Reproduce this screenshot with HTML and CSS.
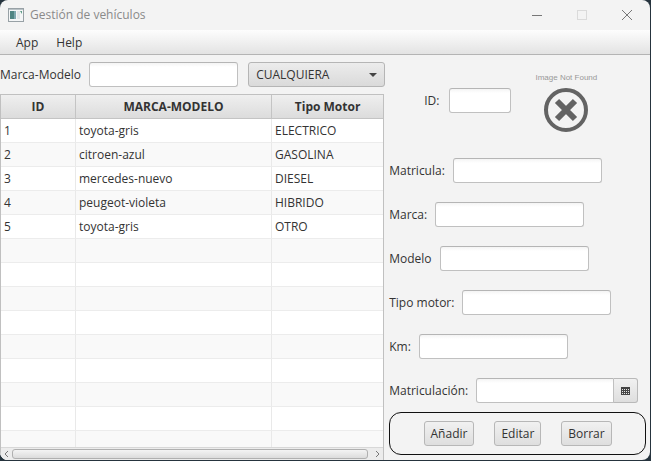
FILE: index.html
```html
<!DOCTYPE html>
<html lang="es">
<head>
<meta charset="utf-8">
<title>Gestión de vehículos</title>
<link rel="stylesheet" href="styles.css">
</head>
<body>
<div class="window">
  <header class="titlebar">
    <svg class="app-icon" width="16" height="14" viewBox="0 0 16 14" aria-hidden="true">
      <rect x="0.5" y="0.5" width="15" height="13" fill="#f4f6f7" stroke="#98a1a6"/>
      <rect x="1" y="1" width="14" height="1" fill="#b9c2c6"/>
      <rect x="2" y="3" width="6" height="8" fill="#4f8583"/>
      <rect x="6" y="3" width="2" height="8" fill="#7fa9b0"/>
      <rect x="9" y="3" width="3" height="8" fill="#e1e6e8"/>
      <path d="M12 3h2v3z" fill="#5d9a86"/>
    </svg>
    <span class="title">Gestión de vehículos</span>
    <div class="window-buttons">
      <button type="button" aria-label="Minimizar"><svg width="12" height="12" viewBox="0 0 12 12"><path d="M1 6.5h10" stroke="#777"/></svg></button>
      <button type="button" aria-label="Maximizar" disabled><svg width="12" height="12" viewBox="0 0 12 12"><rect x="1.5" y="1.5" width="9" height="9" fill="none" stroke="#dadada"/></svg></button>
      <button type="button" aria-label="Cerrar"><svg width="12" height="12" viewBox="0 0 12 12"><path d="M1 1l10 10M11 1L1 11" stroke="#777"/></svg></button>
    </div>
  </header>
  <nav class="menubar">
    <button type="button">App</button>
    <button type="button">Help</button>
  </nav>
  <main class="content">
    <section class="list">
      <div class="filters">
        <label for="filter">Marca-Modelo</label>
        <input class="field" id="filter" type="text">
        <div class="combo">
          <select aria-label="Tipo de motor">
            <option>CUALQUIERA</option>
            <option>ELECTRICO</option>
            <option>GASOLINA</option>
            <option>DIESEL</option>
            <option>HIBRIDO</option>
            <option>OTRO</option>
          </select>
          <svg class="arrow" width="8" height="4" viewBox="0 0 8 4" aria-hidden="true"><path d="M0 0h8L4 4z" fill="#444"/></svg>
        </div>
      </div>
      <div class="table-view">
        <div class="rows">
          <table>
            <colgroup><col class="col-id"><col class="col-model"><col></colgroup>
            <thead><tr><th>ID</th><th>MARCA-MODELO</th><th>Tipo Motor</th></tr></thead>
            <tbody>
              <tr><td>1</td><td>toyota-gris</td><td>ELECTRICO</td></tr>
              <tr><td>2</td><td>citroen-azul</td><td>GASOLINA</td></tr>
              <tr><td>3</td><td>mercedes-nuevo</td><td>DIESEL</td></tr>
              <tr><td>4</td><td>peugeot-violeta</td><td>HIBRIDO</td></tr>
              <tr><td>5</td><td>toyota-gris</td><td>OTRO</td></tr>
              <tr><td></td><td></td><td></td></tr>
              <tr><td></td><td></td><td></td></tr>
              <tr><td></td><td></td><td></td></tr>
              <tr><td></td><td></td><td></td></tr>
              <tr><td></td><td></td><td></td></tr>
              <tr><td></td><td></td><td></td></tr>
              <tr><td></td><td></td><td></td></tr>
              <tr><td></td><td></td><td></td></tr>
              <tr><td></td><td></td><td></td></tr>
            </tbody>
          </table>
        </div>
        <div class="scrollbar">
          <button type="button" aria-label="Desplazar a la izquierda"><svg width="5" height="8" viewBox="0 0 5 8"><path d="M4 1L1 4l3 3" fill="none" stroke="#777"/></svg></button>
          <div class="thumb"></div>
          <button type="button" aria-label="Desplazar a la derecha"><svg width="5" height="8" viewBox="0 0 5 8"><path d="M1 1l3 3-3 3" fill="none" stroke="#777"/></svg></button>
        </div>
      </div>
    </section>
    <form class="details">
      <div class="summary">
        <div class="row"><label for="id">ID:</label><input class="field short" id="id" type="text"></div>
        <figure>
          <figcaption>Image Not Found</figcaption>
          <svg width="46" height="46" viewBox="0 0 46 46" aria-hidden="true">
            <circle cx="23" cy="23" r="20" fill="none" stroke="#636363" stroke-width="4"/>
            <path d="M14 14l18 18M32 14L14 32" stroke="#636363" stroke-width="6"/>
          </svg>
        </figure>
      </div>
      <div class="row"><label for="plate">Matricula:</label><input class="field" id="plate" type="text"></div>
      <div class="row"><label for="brand">Marca:</label><input class="field" id="brand" type="text"></div>
      <div class="row"><label for="model">Modelo</label><input class="field" id="model" type="text"></div>
      <div class="row"><label for="engine">Tipo motor:</label><input class="field" id="engine" type="text"></div>
      <div class="row"><label for="km">Km:</label><input class="field" id="km" type="text"></div>
      <div class="row">
        <label for="date">Matriculación:</label>
        <div class="date">
          <input class="field" id="date" type="text">
          <button type="button" aria-label="Abrir calendario"><svg width="9" height="8" viewBox="0 0 9 8"><path d="M0 0h9v8H0z" fill="#444"/><path d="M1 2h1v1H1zM3 2h1v1H3zM5 2h1v1H5zM7 2h1v1H7zM1 4h1v1H1zM3 4h1v1H3zM5 4h1v1H5zM7 4h1v1H7zM1 6h1v1H1zM3 6h1v1H3zM5 6h1v1H5zM7 6h1v1H7z" fill="#e4e4e4"/></svg></button>
        </div>
      </div>
      <div class="actions">
        <button type="button">Añadir</button>
        <button type="button">Editar</button>
        <button type="button">Borrar</button>
      </div>
    </form>
  </main>
</div>
</body>
</html>
```
FILE: styles.css
```css
* { box-sizing: border-box; }

body {
  margin: 0;
  background: #26343e;
  color: #333;
  font: 12px/16px "Open Sans", "Noto Sans", sans-serif;
}

button, input, select {
  margin: 0;
  color: inherit;
  font: inherit;
}

svg { display: block; }

.window {
  display: flex;
  flex-direction: column;
  height: calc(100vh - 1px);
  margin-right: 1px;
  overflow: hidden;
  border-radius: 8px;
  background: #f3f3f3;
}

.titlebar {
  display: flex;
  flex: none;
  align-items: center;
  height: 30px;
  padding-left: 8px;
  color: #8a8a8a;
}

.title { margin-left: 6px; }

.window-buttons {
  display: flex;
  margin-left: auto;
  padding-right: 1px;
}

.window-buttons button {
  display: grid;
  place-items: center;
  width: 45px;
  height: 28px;
  padding: 0;
  border: 0;
  background: none;
}

.menubar {
  display: flex;
  flex: none;
  height: 25px;
  padding: 0 7px;
  border-bottom: 1px solid #b4b4b4;
  background: linear-gradient(#fdfdfd, #e3e3e3);
}

.menubar button {
  padding: 2px 9px 0;
  border: 0;
  background: none;
}

.content {
  display: flex;
  flex: 1;
  min-height: 0;
}

.list {
  display: flex;
  flex: 3;
  flex-direction: column;
  min-width: 385px;
}

.filters {
  display: flex;
  align-items: center;
  gap: 8px;
  padding: 7px 0;
}

.filters .field { flex: 1; }

.field {
  width: 149px;
  min-width: 0;
  height: 25px;
  padding: 0 7px;
  border: 1px solid #c0c0c0;
  border-top-color: #b5b5b5;
  border-radius: 3px;
  background: linear-gradient(#f4f4f4, #fff 4px);
}

.field.short { width: 62px; }

.combo {
  position: relative;
  width: 137px;
  margin-left: 2px;
}

.combo select {
  display: block;
  width: 100%;
  height: 25px;
  padding: 0 7px;
  appearance: none;
  border: 1px solid #b5b5b5;
  border-radius: 3px;
  background: linear-gradient(#ececec, #dadada);
}

.arrow {
  position: absolute;
  top: 11px;
  right: 8px;
  pointer-events: none;
}

.table-view {
  display: flex;
  flex: 1;
  flex-direction: column;
  min-height: 0;
  margin-right: 1px;
  border: 1px solid #c0c0c0;
  border-bottom: 0;
  background: #fff;
}

.rows {
  flex: 1;
  min-height: 0;
  overflow: hidden;
}

table {
  width: 100%;
  border-collapse: separate;
  border-spacing: 0;
  table-layout: fixed;
}

.col-id { width: 75px; }
.col-model { width: 196px; }

th, td {
  height: 24px;
  padding: 0 3px;
  border-right: 1px solid #e9e9e9;
  border-bottom: 1px solid #ececec;
  text-align: left;
}

th {
  border-color: #c4c4c4;
  background: linear-gradient(#efefef, #dcdcdc);
  text-align: center;
}

th:last-child, td:last-child { border-right: 0; }

tbody tr:nth-child(even) { background: #f9f9f9; }

.scrollbar {
  display: flex;
  flex: none;
  align-items: center;
  height: 13px;
  border-top: 1px solid #d8d8d8;
  background: #ececec;
}

.scrollbar button {
  display: grid;
  place-items: center;
  width: 11px;
  height: 12px;
  padding: 0;
  border: 0;
  background: none;
}

.thumb {
  flex: 1;
  height: 10px;
  margin-right: 4px;
  border: 1px solid #b0b0b0;
  border-radius: 3px;
  background: linear-gradient(#f4f4f4, #dcdcdc);
}

.details {
  display: flex;
  flex: 2;
  flex-direction: column;
  gap: 19px;
  padding: 0 4px;
}

.summary {
  display: flex;
  align-items: flex-start;
  height: 84px;
  padding: 18px 0 0 35px;
}

.summary .row { margin-top: 15px; }

.row {
  display: flex;
  align-items: center;
  gap: 8px;
}

.summary .row { gap: 10px; }

figure {
  display: flex;
  flex-direction: column;
  align-items: center;
  gap: 4px;
  margin: 0 0 0 24px;
}

figcaption {
  color: #999;
  font: 8px/10px "Liberation Sans", sans-serif;
}

.date { display: flex; }

.date .field {
  width: 138px;
  border-radius: 3px 0 0 3px;
}

.date button {
  display: grid;
  place-items: center;
  width: 24px;
  padding: 0;
  border: 1px solid #b9b9b9;
  border-left: 0;
  border-radius: 0 3px 3px 0;
  background: linear-gradient(#f1f1f1, #dedede);
}

.actions {
  display: flex;
  align-items: center;
  justify-content: center;
  gap: 20px;
  height: 43px;
  margin-top: -10px;
  border: 1px solid #111;
  border-radius: 12px;
}

.actions button {
  height: 25px;
  padding: 0 6px;
  border: 1px solid #b7b7b7;
  border-radius: 3px;
  background: linear-gradient(#f1f1f1, #dedede);
}
```
